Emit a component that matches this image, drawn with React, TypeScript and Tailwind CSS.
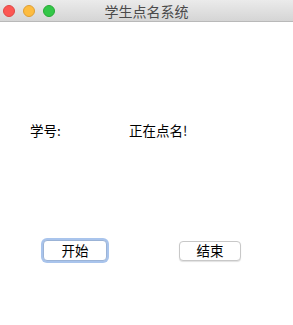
export default function App() {
  const font = { fontFamily: '"Noto Sans CJK SC", "Liberation Sans", sans-serif' };
  return (
    <div className="w-[293px] h-[325px] bg-white flex flex-col" style={font}>
      <div className="relative h-[22px] flex items-center justify-center bg-gradient-to-b from-[#ebebeb] to-[#d5d5d5] border-b border-[#b9b9b9]">
        <div className="absolute left-[3px] top-[5px] flex gap-[8px]">
          <span className="w-[12px] h-[12px] rounded-full bg-[#fc5753] border border-[#df4744]" />
          <span className="w-[12px] h-[12px] rounded-full bg-[#fdbc40] border border-[#de9f34]" />
          <span className="w-[12px] h-[12px] rounded-full bg-[#33c748] border border-[#27aa35]" />
        </div>
        <span className="text-[14px] text-[#4a4a4a] leading-none">学生点名系统</span>
      </div>
      <div className="flex items-center h-[20px] mt-[98px] text-[13.5px] text-black">
        <span className="ml-[30px] w-[99px]">学号:</span>
        <span>正在点名!</span>
      </div>
      <div className="flex items-center mt-[100px]">
        <button className="ml-[43px] w-[64px] h-[21px] rounded-[4px] bg-white border border-[#9bb3d6] ring-2 ring-[#a9c4ec] text-[13.5px] leading-none text-black">
          开始
        </button>
        <button className="ml-[72px] w-[62px] h-[20px] rounded-[4px] bg-white border border-[#c8c8c8] shadow-[0_1px_1px_rgba(0,0,0,0.12)] text-[13.5px] leading-none text-black">
          结束
        </button>
      </div>
    </div>
  );
}
